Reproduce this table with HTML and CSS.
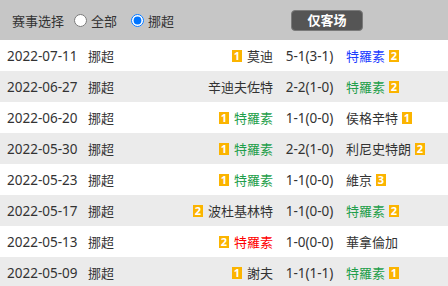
FILE: index.html
```html
<!DOCTYPE html>
<html lang="zh">
<head>
<meta charset="utf-8">
<link rel="stylesheet" href="styles.css">
</head>
<body>
<div class="bar">
  <span class="label">赛事选择</span>
  <label class="opt"><input type="radio" name="lg"> 全部</label>
  <label class="opt"><input type="radio" name="lg" checked> 挪超</label>
  <button class="btn">仅客场</button>
</div>
<div class="list">
  <div class="row"><span class="date">2022-07-11</span><span class="lg">挪超</span><span class="home"><i class="b">1</i>莫迪</span><span class="score">5-1(3-1)</span><span class="away"><em class="blue">特羅素</em><i class="b">2</i></span></div>
  <div class="row alt"><span class="date">2022-06-27</span><span class="lg">挪超</span><span class="home">辛迪夫佐特</span><span class="score">2-2(1-0)</span><span class="away"><em class="green">特羅素</em><i class="b">2</i></span></div>
  <div class="row"><span class="date">2022-06-20</span><span class="lg">挪超</span><span class="home"><i class="b">1</i><em class="green">特羅素</em></span><span class="score">1-1(0-0)</span><span class="away">侯格辛特<i class="b">1</i></span></div>
  <div class="row alt"><span class="date">2022-05-30</span><span class="lg">挪超</span><span class="home"><i class="b">1</i><em class="green">特羅素</em></span><span class="score">2-2(1-0)</span><span class="away">利尼史特朗<i class="b">2</i></span></div>
  <div class="row"><span class="date">2022-05-23</span><span class="lg">挪超</span><span class="home"><i class="b">1</i><em class="green">特羅素</em></span><span class="score">1-1(0-0)</span><span class="away">維京<i class="b">3</i></span></div>
  <div class="row alt"><span class="date">2022-05-17</span><span class="lg">挪超</span><span class="home"><i class="b">2</i>波杜基林特</span><span class="score">1-1(0-0)</span><span class="away"><em class="green">特羅素</em><i class="b">2</i></span></div>
  <div class="row"><span class="date">2022-05-13</span><span class="lg">挪超</span><span class="home"><i class="b">2</i><em class="red">特羅素</em></span><span class="score">1-0(0-0)</span><span class="away">華拿倫加</span></div>
  <div class="row alt"><span class="date">2022-05-09</span><span class="lg">挪超</span><span class="home"><i class="b">1</i>謝夫</span><span class="score">1-1(1-1)</span><span class="away"><em class="green">特羅素</em><i class="b">1</i></span></div>
</div>
</body>
</html>
```

FILE: styles.css
```css
* { box-sizing: border-box; }
html, body { margin: 0; padding: 0; background: #fff; }
body {
  font-family: "Noto Sans", "Noto Sans CJK SC", sans-serif;
  font-size: 13px;
  color: #333;
}
.bar {
  height: 40px;
  background: #c6c6c6;
  display: flex;
  align-items: center;
  padding-left: 12px;
}
.label { margin-right: 9px; }
.opt { display: flex; align-items: center; margin-right: 13px; }
.opt input { margin: 0 4px 0 1px; width: 13px; height: 13px; }
.btn {
  margin-left: 104px;
  width: 72px;
  height: 21px;
  background: #555;
  border: 1px solid #7a7a7a;
  border-radius: 4px;
  color: #fff;
  font-family: inherit;
  font-size: 13px;
  font-weight: bold;
  padding: 0;
  line-height: 19px;
}
.row {
  height: 31px;
  display: grid;
  grid-template-columns: 81px 50px 135px 73px 1fr;
  align-items: center;
  padding-left: 7px;
  white-space: nowrap;
}
.alt { background: #ebebeb; }
.date, .score { font-size: 13.5px; }
.home { display: flex; justify-content: flex-end; align-items: center; }
.score { text-align: center; }
.away { display: flex; align-items: center; }
em { font-style: normal; }
.blue { color: #1a3cff; }
.green { color: #1e9e4a; }
.red { color: #ff0000; }
.b {
  display: inline-block;
  width: 10px;
  height: 12px;
  background: #fbb400;
  color: #fff;
  font-style: normal;
  font-weight: bold;
  font-size: 11px;
  line-height: 12px;
  text-align: center;
}
.home .b { margin-right: 5px; }
.away .b { margin-left: 4px; }
```
